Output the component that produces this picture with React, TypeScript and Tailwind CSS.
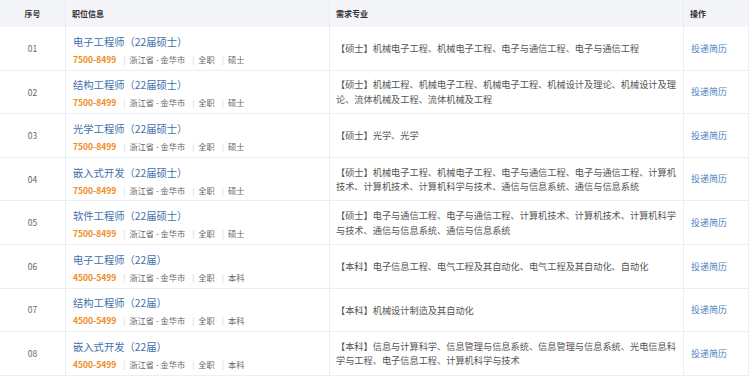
import React from "react";

type Job = {
    title: string;
    salary: string;
    degree: string;
    majors: string;
};

const jobs: Job[] = [
    { title: "电子工程师（22届硕士）", salary: "7500-8499", degree: "硕士", majors: "【硕士】机械电子工程、机械电子工程、电子与通信工程、电子与通信工程" },
    { title: "结构工程师（22届硕士）", salary: "7500-8499", degree: "硕士", majors: "【硕士】机械工程、机械电子工程、机械电子工程、机械设计及理论、机械设计及理论、流体机械及工程、流体机械及工程" },
    { title: "光学工程师（22届硕士）", salary: "7500-8499", degree: "硕士", majors: "【硕士】光学、光学" },
    { title: "嵌入式开发（22届硕士）", salary: "7500-8499", degree: "硕士", majors: "【硕士】机械电子工程、机械电子工程、电子与通信工程、电子与通信工程、计算机技术、计算机技术、计算机科学与技术、通信与信息系统、通信与信息系统" },
    { title: "软件工程师（22届硕士）", salary: "7500-8499", degree: "硕士", majors: "【硕士】电子与通信工程、电子与通信工程、计算机技术、计算机技术、计算机科学与技术、通信与信息系统、通信与信息系统" },
    { title: "电子工程师（22届）", salary: "4500-5499", degree: "本科", majors: "【本科】电子信息工程、电气工程及其自动化、电气工程及其自动化、自动化" },
    { title: "结构工程师（22届）", salary: "4500-5499", degree: "本科", majors: "【本科】机械设计制造及其自动化" },
    { title: "嵌入式开发（22届）", salary: "4500-5499", degree: "本科", majors: "【本科】信息与计算科学、信息管理与信息系统、信息管理与信息系统、光电信息科学与工程、电子信息工程、计算机科学与技术" },
];

const Sep: React.FC = () => <span className="mr-[4px] ml-[7px] text-[#d0d0d0]">|</span>;

export default function App() {
    return (
        <div
            className="w-[750px] h-[377px] overflow-hidden bg-white"
            style={{ fontFamily: '"Noto Sans CJK SC", "Noto Sans", sans-serif' }}
        >
            <div className="w-[749px] border-r border-[#eceef3]">
                {/* header */}
                <div className="flex h-[27px] bg-[#f3f5f9] text-[8px] font-bold text-[#333]">
                    <div className="w-[66px] flex items-center justify-center border-r border-[#e9ebf0]">序号</div>
                    <div className="w-[264px] flex items-center pl-[6px] border-r border-[#e9ebf0]">职位信息</div>
                    <div className="w-[354px] flex items-center pl-[6px] border-r border-[#e9ebf0]">需求专业</div>
                    <div className="flex-1 flex items-center pl-[6px]">操作</div>
                </div>

                {jobs.map((job, i) => (
                    <div key={i} className="flex h-[43.6px] border-b border-[#eceef3]">
                        <div className="w-[66px] flex items-center justify-center border-r border-[#eceef3] text-[8.5px] text-[#666]">
                            {String(i + 1).padStart(2, "0")}
                        </div>
                        <div className="w-[264px] flex flex-col justify-center pl-[7px] pt-[2px] border-r border-[#eceef3]">
                            <div className="text-[10.3px] leading-[16px] text-[#3f70ab]">{job.title}</div>
                            <div className="mt-[3px] flex items-center text-[8.2px] leading-[12px] text-[#666]">
                                <span className="text-[8.5px] font-bold text-[#f08a24]">{job.salary}</span>
                                <Sep />
                                <span>浙江省 - 金华市</span>
                                <Sep />
                                <span>全职</span>
                                <Sep />
                                <span>{job.degree}</span>
                            </div>
                        </div>
                        <div className="w-[354px] flex items-center pl-[6px] pr-[4px] border-r border-[#eceef3] text-[9.2px] leading-[14.5px] text-[#555]">
                            <p>{job.majors}</p>
                        </div>
                        <div className="flex-1 flex items-center pl-[7px] text-[9px] text-[#4a7fc1]">投递简历</div>
                    </div>
                ))}
            </div>
        </div>
    );
}
